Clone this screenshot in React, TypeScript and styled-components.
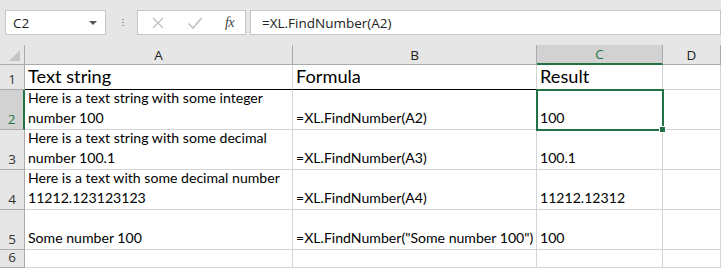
import styled, { createGlobalStyle } from "styled-components";

const GlobalStyle = createGlobalStyle`
  html, body {
    margin: 0;
    padding: 0;
    background: #e6e6e6;
    overflow: hidden;
  }
`;

const Window = styled.div`
  width: 721px;
  height: 268px;
  overflow: hidden;
  background: #e6e6e6;
  font-family: "Open Sans", "Liberation Sans", sans-serif;
`;

const FormulaBar = styled.div`
  display: flex;
  align-items: flex-start;
  height: 45px;
  padding: 10px 0 0 5px;
  box-sizing: border-box;
`;

const Box = styled.div<{ width?: number }>`
  display: flex;
  align-items: center;
  box-sizing: border-box;
  height: 25px;
  width: ${(p) => (p.width ? `${p.width}px` : "auto")};
  flex: ${(p) => (p.width ? "none" : "1")};
  background: #fff;
  border: 1px solid #c6c6c6;
`;

const NameText = styled.span`
  flex: 1;
  padding-left: 7px;
  font-size: 13.5px;
  color: #222;
`;

const DropArrow = styled.span`
  width: 0;
  height: 0;
  margin-right: 8px;
  border-left: 4px solid transparent;
  border-right: 4px solid transparent;
  border-top: 4px solid #555;
`;

const Grip = styled.div`
  width: 15px;
  margin: 0 7px 0 9px;
  height: 25px;
  display: flex;
  justify-content: center;
  align-items: center;
  &::before {
    content: "";
    width: 2px;
    height: 10px;
    background: radial-gradient(circle, #999 50%, transparent 55%) 0 0 / 2px 3px repeat-y;
  }
`;

const Buttons = styled(Box)`
  justify-content: space-between;
  padding: 0 11px 0 13px;
  margin-right: 4px;
`;

const FxText = styled.span`
  font-family: "Liberation Serif", serif;
  font-style: italic;
  font-size: 14px;
  color: #444;
  letter-spacing: -0.5px;
`;

const FormulaText = styled.span`
  padding-left: 11px;
  font-size: 13.5px;
  color: #222;
  white-space: nowrap;
`;

const Sheet = styled.div`
  display: grid;
  grid-template-columns: 25px 268px 244px 126px 58px;
  grid-template-rows: 20px 25px 40px 40px 40px 40px 18px;
`;

const ColHead = styled.div<{ active?: boolean }>`
  display: flex;
  align-items: center;
  justify-content: center;
  box-sizing: border-box;
  background: ${(p) => (p.active ? "#d2d2d2" : "#e6e6e6")};
  border-right: 1px solid #ababab;
  border-bottom: ${(p) => (p.active ? "2px solid #217346" : "1px solid #ababab")};
  font-size: 13.5px;
  color: ${(p) => (p.active ? "#217346" : "#222")};
`;

const Corner = styled(ColHead)`
  position: relative;
  &::after {
    content: "";
    position: absolute;
    right: 4px;
    bottom: 3px;
    width: 0;
    height: 0;
    border-left: 11px solid transparent;
    border-bottom: 11px solid #c4c4c4;
  }
`;

const RowHead = styled.div<{ active?: boolean }>`
  display: flex;
  align-items: flex-end;
  justify-content: center;
  box-sizing: border-box;
  padding-bottom: 1px;
  background: ${(p) => (p.active ? "#d2d2d2" : "#e6e6e6")};
  border-right: ${(p) => (p.active ? "2px solid #217346" : "1px solid #ababab")};
  border-bottom: 1px solid #ababab;
  font-size: 13.5px;
  color: ${(p) => (p.active ? "#217346" : "#333")};
`;

const Cell = styled.div<{ big?: boolean; ruled?: boolean; selected?: boolean }>`
  position: relative;
  display: flex;
  flex-direction: column;
  justify-content: flex-end;
  box-sizing: border-box;
  padding: 0 0 1px 3px;
  background: #fff;
  border-right: 1px solid #d4d4d4;
  border-bottom: 1px solid ${(p) => (p.ruled ? "#000" : "#d4d4d4")};
  font-family: Lato, "Liberation Sans", sans-serif;
  font-size: ${(p) => (p.big ? "18.2px" : "14.1px")};
  line-height: ${(p) => (p.big ? "24px" : "20px")};
  color: #000;
  white-space: nowrap;
  outline: ${(p) => (p.selected ? "2px solid #217346" : "none")};
  outline-offset: -1px;
  z-index: ${(p) => (p.selected ? 1 : 0)};
  &::after {
    content: "";
    display: ${(p) => (p.selected ? "block" : "none")};
    position: absolute;
    right: -4px;
    bottom: -4px;
    width: 5px;
    height: 5px;
    background: #217346;
    border: 1px solid #fff;
  }
`;

interface IRow {
  text: string[];
  formula: string;
  result: string;
}

const rows: IRow[] = [
  {
    text: ["Here is a text string with some integer", "number 100"],
    formula: "=XL.FindNumber(A2)",
    result: "100",
  },
  {
    text: ["Here is a text string with some decimal", "number 100.1"],
    formula: "=XL.FindNumber(A3)",
    result: "100.1",
  },
  {
    text: ["Here is a text with some decimal number", "11212.123123123"],
    formula: "=XL.FindNumber(A4)",
    result: "11212.12312",
  },
  {
    text: ["Some number 100"],
    formula: '=XL.FindNumber("Some number 100")',
    result: "100",
  },
];

function App() {
  return (
    <Window>
      <GlobalStyle />
      <FormulaBar>
        <Box width={101}>
          <NameText>C2</NameText>
          <DropArrow />
        </Box>
        <Grip />
        <Buttons width={109}>
          <svg width="14" height="14" viewBox="0 0 14 14">
            <path d="M2 2l10 10M12 2L2 12" stroke="#c2c2c2" strokeWidth="1.4" fill="none" />
          </svg>
          <svg width="16" height="14" viewBox="0 0 16 14">
            <path d="M1.5 7.5l4.5 4.5L14.5 2" stroke="#c2c2c2" strokeWidth="1.6" fill="none" />
          </svg>
          <FxText>fx</FxText>
        </Buttons>
        <Box>
          <FormulaText>=XL.FindNumber(A2)</FormulaText>
        </Box>
      </FormulaBar>

      <Sheet>
        <Corner />
        <ColHead>A</ColHead>
        <ColHead>B</ColHead>
        <ColHead active>C</ColHead>
        <ColHead>D</ColHead>

        <RowHead>1</RowHead>
        <Cell big ruled>Text string</Cell>
        <Cell big ruled>Formula</Cell>
        <Cell big ruled>Result</Cell>
        <Cell />

        {rows.map((row, i) => (
          <>
            <RowHead key={`h${i}`} active={i === 0}>
              {i + 2}
            </RowHead>
            <Cell key={`a${i}`}>
              {row.text.map((line) => (
                <span key={line}>{line}</span>
              ))}
            </Cell>
            <Cell key={`b${i}`}>{row.formula}</Cell>
            <Cell key={`c${i}`} selected={i === 0}>
              {row.result}
            </Cell>
            <Cell key={`d${i}`} />
          </>
        ))}

        <RowHead>6</RowHead>
        <Cell />
        <Cell />
        <Cell />
        <Cell />
      </Sheet>
    </Window>
  );
}

export default App;
